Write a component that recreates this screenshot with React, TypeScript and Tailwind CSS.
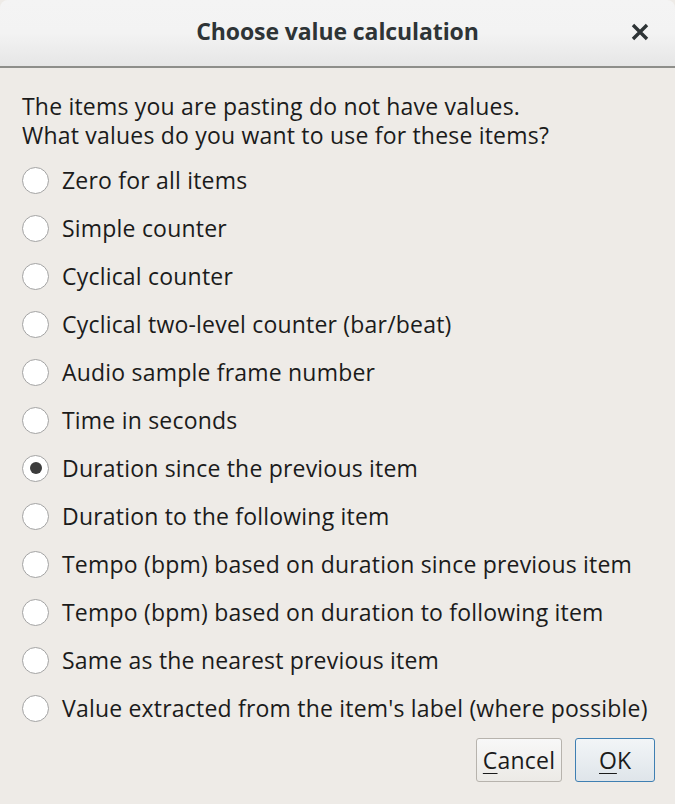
import React from "react";

const options = [
  "Zero for all items",
  "Simple counter",
  "Cyclical counter",
  "Cyclical two-level counter (bar/beat)",
  "Audio sample frame number",
  "Time in seconds",
  "Duration since the previous item",
  "Duration to the following item",
  "Tempo (bpm) based on duration since previous item",
  "Tempo (bpm) based on duration to following item",
  "Same as the nearest previous item",
  "Value extracted from the item's label (where possible)",
];

export default function App() {
  const selected = 6;
  return (
    <div
      className="w-[675px] h-[804px] bg-[#eeebe7] text-[#1b1b1b] flex flex-col overflow-hidden"
      style={{ fontFamily: '"Open Sans", "Noto Sans", sans-serif' }}
    >
      <div className="h-[68px] shrink-0 bg-gradient-to-b from-[#f4f4f4] via-[#f3f3f3] to-[#e6e6e6] border-b-2 border-[#8e8e8a] rounded-t-[8px] relative flex items-center justify-center">
        <div className="text-[23px] font-bold text-[#2e3436] tracking-[-0.1px] -mt-[3px]">
          Choose value calculation
        </div>
        <svg className="absolute left-[631px] top-[23px]" width="18" height="18" viewBox="0 0 18 18">
          <path d="M2 2 L16 16 M16 2 L2 16" stroke="#2e3436" strokeWidth="3.4" strokeLinecap="butt" />
        </svg>
      </div>
      <div className="flex flex-col pl-[22px] pt-[24px] text-[23px] tracking-[0.2px]">
        <div className="leading-[29px]">
          The items you are pasting do not have values.
          <br />
          What values do you want to use for these items?
        </div>
        <div className="flex flex-col mt-[6px]">
          {options.map((o, i) => (
            <div key={o} className="h-[48px] flex items-center">
              <div className="w-[27px] h-[27px] rounded-full border border-[#a3a3a3] bg-white flex items-center justify-center shrink-0">
                {i === selected && <div className="w-[12px] h-[12px] rounded-full bg-[#3c3c3c]" />}
              </div>
              <span className="ml-[13px] whitespace-nowrap">{o}</span>
            </div>
          ))}
        </div>
      </div>
      <div className="flex justify-end gap-[13px] pr-[20px] mt-[6px]">
        <button className="w-[86px] h-[44px] rounded-[3px] border border-[#b7b3ad] bg-gradient-to-b from-[#f8f8f8] to-[#eceae6] text-[23px] tracking-[0.2px]">
          <span className="underline underline-offset-[4px] decoration-1">C</span>ancel
        </button>
        <button className="w-[80px] h-[44px] rounded-[3px] border border-[#3f7fb2] bg-gradient-to-b from-[#f2f5f7] to-[#dfe5ea] text-[23px]">
          <span className="underline underline-offset-[4px] decoration-1">O</span>K
        </button>
      </div>
    </div>
  );
}
